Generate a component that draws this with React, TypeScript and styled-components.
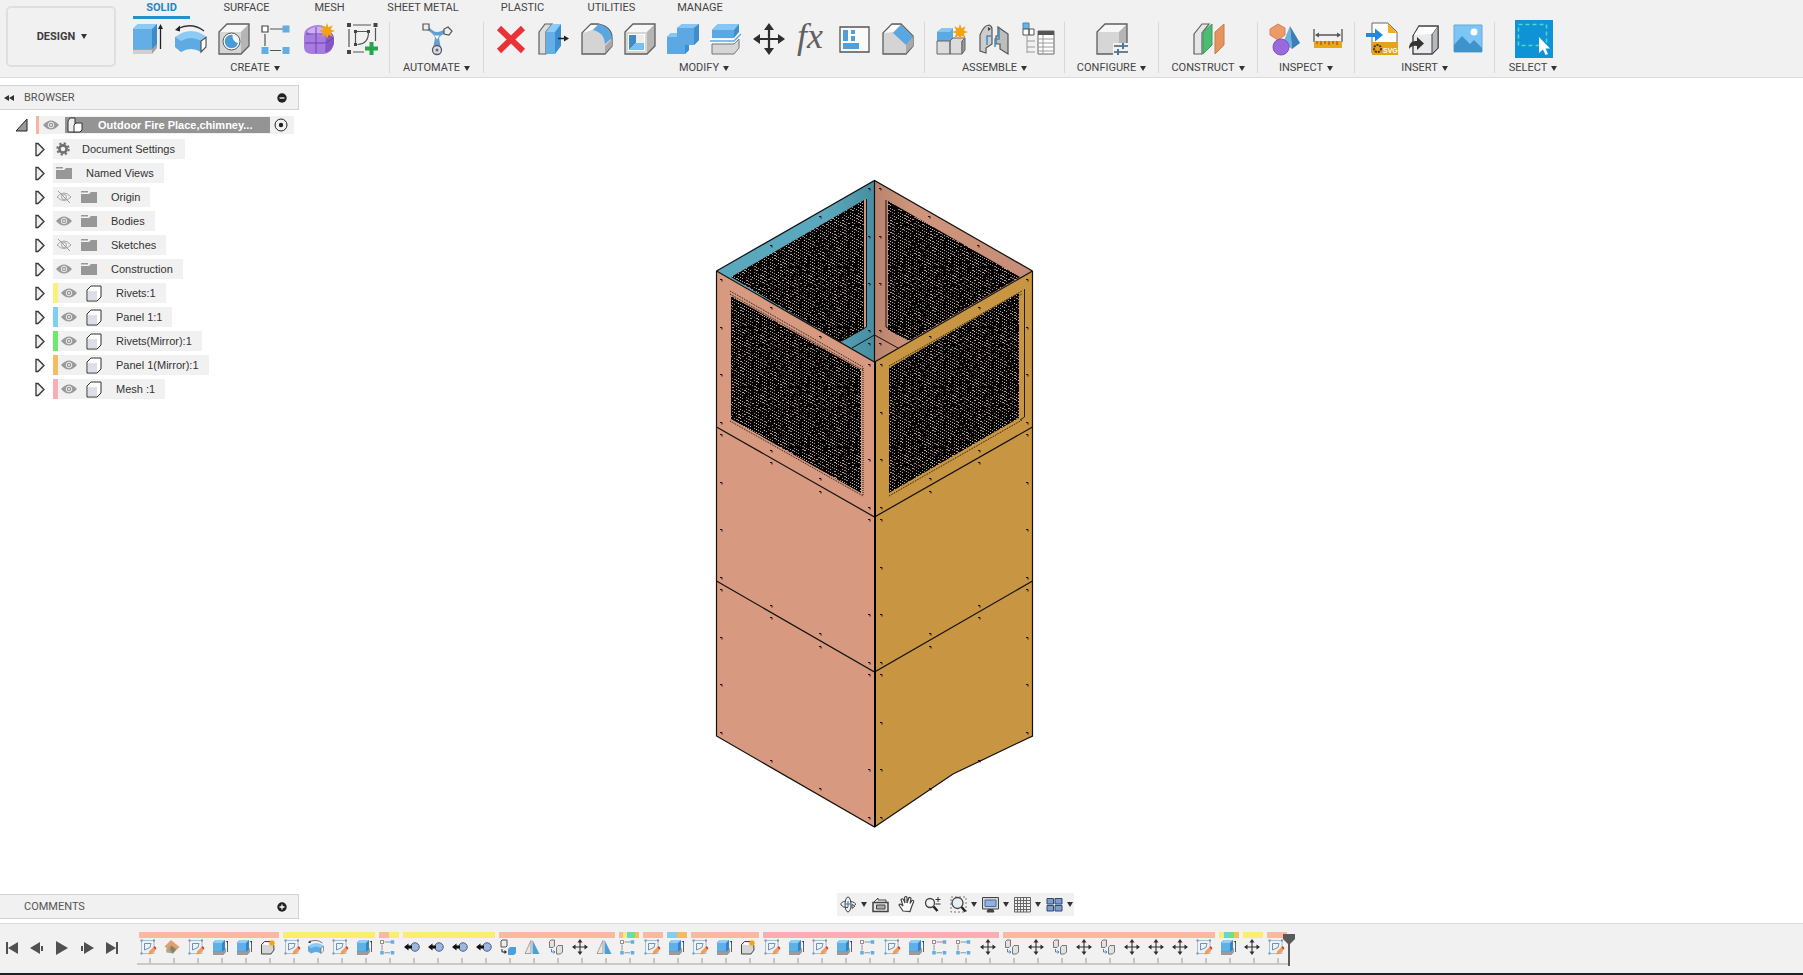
import React from "react";
import styled, { createGlobalStyle } from "styled-components";

const Global = createGlobalStyle`
  * { box-sizing: border-box; }
  body { margin: 0; background: #fff; color: #3c3c3c; font-family: Roboto, Arial, sans-serif; font-size: 11px; }
  button { font: inherit; color: inherit; background: none; border: 0; padding: 0; margin: 0; display: inline-flex; align-items: center; justify-content: center; }
  svg { display: block; flex: none; }
  ul { list-style: none; margin: 0; padding: 0; }
`;

/* ---------- shell ---------- */
const Page = styled.div`min-height: 100vh; display: flex; flex-direction: column; background: #fff; overflow-x: hidden;`;
const Toolbar = styled.header`display: flex; background: #f1f1f1; border-bottom: 1px solid #dadada; height: 78px; flex: none;`;
const DesignButton = styled.button`
  width: 110px; margin: 6px 5px 10px 6px; border: 2px solid #dfdfdf; border-radius: 5px;
  font-weight: 700; gap: 6px; flex: none; padding-left: 2px;
`;
const Ribbon = styled.div`flex: 1; min-width: 0;`;
const Tabs = styled.nav`display: flex; gap: 20px; padding-left: 12px;`;
const Tab = styled.button<{ $width: number; $active?: boolean }>`
  width: ${p => p.$width}px; height: 19px; padding: 0 0 1px; line-height: 14px;
  border-bottom: 3px solid ${p => (p.$active ? "#2a8fc9" : "transparent")};
  color: ${p => (p.$active ? "#1f87c4" : "#444")};
  font-weight: ${p => (p.$active ? 700 : 400)}; white-space: nowrap;
`;
const Groups = styled.div`display: flex; margin-top: 3px;`;
const Group = styled.section<{ $width?: number }>`
  display: flex; flex-direction: column; align-items: center; height: 51px; padding-top: 1px; flex: none;
  width: ${p => (p.$width ? `${p.$width}px` : "auto")};
  border-right: 1px solid #d8d8d8;
  &:last-child { border-right: 0; }
`;
const Icons = styled.div`display: flex; gap: 11px; padding: 0 10px 0 11px; height: 32px; align-items: center;`;
const Menu = styled.button`line-height: 14px; margin-top: 6px; gap: 4px; white-space: nowrap; color: #444;`;
const Caret = styled.span`width: 0; height: 0; border: 3px solid transparent; border-top: 5px solid #333; border-bottom: 0;`;

/* ---------- icons ---------- */
type IcoProps = { size?: number; children: React.ReactNode };
const Ico = ({ size = 32, children }: IcoProps) => (
  <svg width={size} height={size} viewBox="0 0 32 32" fill="none" overflow="visible" aria-hidden="true">{children}</svg>
);
const K = "#5f5f5f";
const star = (x: number, y: number, r: number) => {
  const pts: string[] = [];
  for (let i = 0; i < 16; i++) {
    const a = (Math.PI * i) / 8, q = i % 2 ? r * 0.5 : r;
    pts.push(`${(x + q * Math.sin(a)).toFixed(1)},${(y - q * Math.cos(a)).toFixed(1)}`);
  }
  return <polygon points={pts.join(" ")} fill="#f2a30f" />;
};
const arrows = (
  <>
    <path d="M16 4V28M4 16H28" stroke="#2e2e2e" strokeWidth="2.2" />
    <path d="M16 0l5 7H11zM16 32l5-7H11zM0 16l7-5v10zM32 16l-7-5v10z" fill="#2e2e2e" />
  </>
);
const cubeGrey = (
  <>
    <path d="M1 9L9 1H31V23L23 31H1Z" fill="#d6d6d6" />
    <path d="M1 9L9 1H31L23 9Z" fill="#f7f7f7" />
    <path d="M31 1V23L23 31V9Z" fill="#b5b5b5" />
    <path d="M1 9L9 1H31V23L23 31H1Z" stroke={K} strokeWidth="1.3" />
  </>
);
const art: Record<string, React.ReactNode> = {
  extrude: <>
    <path d="M1 26l5-5h19v4l-5 6H1z" fill="#a4a4a4" /><path d="M1 27h19v4H1z" fill="#cfcfcf" />
    <path d="M1 6l5-5h19v20l-5 5H1z" fill="#3c8ecb" /><path d="M1 6h19v20H1z" fill="#63aee4" /><path d="M1 6l5-5h19l-5 5z" fill="#8ccbf6" />
    <path d="M28.500 26V5" stroke="#222" strokeWidth="1.300" /><path d="M28.500 1l2.500 5h-5z" fill="#222" />
  </>,
  revolve: <>
    <path d="M0 14Q16 2 32 14L26 19Q16 12 6 19L6 29L0 24Z" fill="#8ccbf6" /><path d="M0 14L6 18Q16 12 26 18V29Q16 23 6 29L0 24Z" fill="#5eaae2" />
    <path d="M26 18L31 14.500V24L26 29Z" fill="#fff" stroke="#555" strokeWidth="1.200" />
    <path d="M3 5.500Q17-1 29 8" stroke="#333" strokeWidth="1.300" /><path d="M0 7l5-4.500v6z" fill="#222" />
  </>,
  hole: <>{cubeGrey}<circle cx="13.500" cy="18.500" r="8.500" fill="#fff" stroke="#555" /><circle cx="13.500" cy="18.500" r="6.800" fill="#4a9bd7" /><path d="M14.500 11.700a6.800 6.800 0 0 1 5.600 8.500q-6-2-5.600-8.500z" fill="#fff" /></>,
  pattern: <>
    <path d="M9 6H22M4 11v12M9 27.500H20" stroke="#555" strokeWidth="1.200" />
    <path d="M1 3h6v6H1z" fill="#fff" stroke="#444" strokeWidth="1.200" /><path d="M21.500 2.500h7v7h-7zM.5 24h7v7h-7zM21.500 24h7v7h-7z" fill="#62aee4" />
  </>,
  form: <>
    <path d="M0 14Q0 6 6 4Q14 0 22 4Q27 8 29 12V22Q28 30 20 31H8Q0 31 0 24Z" fill="#a77be0" /><path d="M3 8Q14-1 24 8Q19 13 12 12Q6 12 3 8Z" fill="#cdaef3" /><path d="M22 11Q29 8 30 15V21Q28 28 21 30Z" fill="#8458c4" />
    <path d="M12 4V30M1 20H22L29 15M2 11H22" stroke="#6f44ae" />{star(23, 8, 8)}
  </>,
  sketch: <>
    <path d="M6 2H24M2 6V24M28.500 5V18M6 29H17" stroke="#555" strokeWidth="1.200" />
    <path d="M0 0h4v4H0zM26.500 0h4v4h-4zM0 27h4v4H0zM7 7h3v3H7zM20 7h3v3h-3zM7 20h3v3H7z" fill="#444" />
    <path d="M8.500 10v10M10 8.500H20M21.500 9q0 12-11 12.500" stroke="#555" strokeWidth="1.200" />
    <path d="M22.500 19h4v4.500H31v4h-4.500V32h-4v-4.500H18v-4h4.500z" fill="#27a34b" />
  </>,
  automate: <>
    <path d="M4 6Q13 10 14 15L12 26H20L18 15Q21 10 29 9L26 5Q20 9 16 9Q12 9 7 3Z" fill="#5f9fd2" /><path d="M13.500 12.500h5l-2.500 4z" fill="#fff" />
    <path d="M2 1h6v6H2z" fill="#eee" stroke="#555" strokeWidth="1.200" /><path d="M27 4l4 4-3 4-5-1v-5z" fill="#eee" stroke="#555" strokeWidth="1.200" />
    <circle cx="16" cy="27" r="4.500" fill="#ddd" stroke="#557" strokeWidth="1.300" /><circle cx="16" cy="27" r="1.500" fill="#667" />
  </>,
  remove: <path d="M4 5L28 28M28 5L4 28" stroke="#ea3338" strokeWidth="6" />,
  press: <>
    <path d="M1 9L7 1H14L8 9V31H1Z" fill="#ddd" stroke={K} strokeWidth="1.200" /><path d="M8 9L14 1H23V23L17 31H8Z" fill="#3e8fcd" /><path d="M8 9H17V31H8Z" fill="#64afe5" /><path d="M8 9L14 1H23L17 9Z" fill="#8ccbf6" />
    <path d="M20 15.500h7" stroke="#222" strokeWidth="1.500" /><path d="M31 15.500l-5-3v6z" fill="#222" />
  </>,
  fillet: <>
    <path d="M1 10L10 1H17Q31 4 31 15V23L24 31H1Z" fill="#d4d4d4" stroke={K} strokeWidth="1.300" /><path d="M2 10L10 2H16L11 7Z" fill="#fff" />
    <path d="M24 23L31 16V23L24 30Z" fill="#a9a9a9" /><path d="M12 7L18 1Q30 4 31 15L24 21Q23 9 12 7Z" fill="#58a7e1" />
  </>,
  shell: <>{cubeGrey}<path d="M4 11H21V28H4Z" fill="#fff" /><path d="M5 12H12V20L5 27Z" fill="#3c8cca" /><path d="M5 27L12 20H20V27Z" fill="#79c0f0" /><path d="M12 12H20V20H12Z" fill="#ececec" /></>,
  combine: <>
    <path d="M10 5L15 1H32V17L27 22H22V27L18 31H0V14L4 10H10Z" fill="#5ba8e2" /><path d="M10 5L15 1H32L27 5ZM0 14L4 10H10V14Z" fill="#86c6f3" /><path d="M32 1V17L27 22V5ZM22 22V27L18 31V22Z" fill="#3d8ecb" />
  </>,
  split: <>
    <path d="M2 7L8 1H29V9L24 15H2Z" fill="#3d8ecb" /><path d="M2 7H24V15H2Z" fill="#5ba8e2" /><path d="M2 7L8 1H29L24 7Z" fill="#86c6f3" />
    <path d="M2 21H24L29 16V25L24 31H2Z" fill="#d6d6d6" stroke="#777" /><path d="M0 18H24L31 11" stroke="#fff" strokeWidth="3.500" /><path d="M0 18H24L31 11" stroke="#5ba8e2" strokeWidth="1.500" />
  </>,
  move: arrows,
  fx: <text x="1" y="25" fontFamily="Liberation Serif, serif" fontStyle="italic" fontSize="36" fill="#606060">fx</text>,
  params: <>
    <path d="M1 4H30V29H1Z" fill="#fafafa" stroke="#555" strokeWidth="1.300" /><path d="M4 7h5v11H4zM12 7h4v4h-4zM12 13h4v5h-4zM4 20h16v6H4z" fill="#4f9fdb" />
  </>,
  chamfer: <>
    <path d="M1 10L10 1H19L31 13V23L24 31H1Z" fill="#d4d4d4" stroke={K} strokeWidth="1.300" /><path d="M2 10L10 2H18L11 9Z" fill="#fff" />
    <path d="M24 22L31 14V23L24 30Z" fill="#a9a9a9" /><path d="M11 10L19 2L31 14L24 22Z" fill="#58a7e1" />
  </>,
  component: <>
    <path d="M1 9L6 5H17V18H1Z" fill="#5ba8e2" /><path d="M1 9L6 5H17L14 9Z" fill="#86c6f3" /><path d="M1 18H14V31H1ZM14 18L17 15H29L26 18V31H14Z" fill="#dcdcdc" stroke="#666" /><path d="M26 18L29 15V27L26 31Z" fill="#999" stroke="#666" />{star(24, 9, 8)}
  </>,
  joint: <>
    <path d="M1 12Q5 2 10 2Q13 3 13 6V21L7 25V30L1 28Z" fill="#cdcdcd" stroke="#555" strokeWidth="1.200" /><path d="M19 4L29 11V31L21 26V21H17V13H19Z" fill="#bdbdbd" stroke="#555" strokeWidth="1.200" /><path d="M12 13H8V22M20 6V16H16V24" stroke="#3f8dc0" strokeWidth="1.500" /><path d="M9 4l3 2-3 2z" fill="#444" />
  </>,
  bom: <>
    <path d="M1 0h6v6H1z" fill="#6cb2e6" stroke="#3f86bb" /><path d="M1 6h6v6H1zM7 6h5v6H7z" fill="#fff" stroke="#555" /><path d="M5 13V30M5 18h8M5 24h8M5 29h8" stroke="#999" />
    <path d="M16 8h16v23H16z" fill="#fff" stroke="#666" /><path d="M16 8h16v4H16z" fill="#555" /><path d="M16 16h16M16 20h16M16 24h16M16 28h16M21 12v19" stroke="#999" />
  </>,
  configure: <>{cubeGrey}<path d="M17 20H33V33H17Z" fill="#f1f1f1" /><path d="M18 23H32M18 29H32" stroke="#555" strokeWidth="1.500" /><path d="M27 20v6M22 26v6" stroke="#2f7fb5" strokeWidth="2" /></>,
  plane: <>
    <path d="M1 11L9 1H16L9 10V31H1Z" fill="#e6e6e6" stroke={K} strokeWidth="1.200" /><path d="M10 9L19 1V22L10 31Z" fill="#4bbd73" stroke="#3a9a5d" /><path d="M22 9L31 1V22L22 31Z" fill="#e5945f" stroke="#c97a48" />
  </>,
  inspect: <>
    <path d="M9 1L16 5V12L9 17L1 12V6Z" fill="#eb9a6a" stroke="#d58354" /><path d="M21 3L14 20L23 26Z" fill="#6cb1e4" /><path d="M21 3L31 20L23 26Z" fill="#3c7fb8" /><circle cx="12" cy="24" r="8" fill="#9a69dc" stroke="#8052c0" />
  </>,
  measure: <>
    <path d="M2 6V19M30 6V19M4 12H28" stroke="#555" strokeWidth="1.300" /><path d="M3 12l4-2.500v5zM29 12l-4-2.500v5z" fill="#555" /><path d="M2 18H30V25H2Z" fill="#eda31b" /><path d="M5 18v3M9 18v4M13 18v3M17 18v4M21 18v3M25 18v4" stroke="#7b530c" />
  </>,
  svg: <>
    <path d="M6 0H22L31 9V30H6Z" fill="#fff" stroke="#666" /><path d="M22 0L31 10H22Z" fill="#f4ad20" /><path d="M6 19H32V32H6Z" fill="#e9a01a" /><circle cx="11.500" cy="25.500" r="3.500" stroke="#4b3306" strokeWidth="2" strokeDasharray="2 1" />
    <text x="17" y="30" fontFamily="Liberation Sans, sans-serif" fontWeight="700" fontSize="7" fill="#fff">SVG</text><path d="M0 10H9V5.500L17 12L9 18.500V14H0Z" fill="#2188de" />
  </>,
  derive: <>
    <path d="M4 13L10 3H29V25L23 31H4Z" fill="#e8eaee" stroke="#444" strokeWidth="1.400" /><path d="M23 11L29 3V25L23 31Z" fill="#b9b9bd" stroke="#444" /><path d="M5 12L10 4H28L23 11Z" fill="#fff" /><path d="M0 26Q0 17 8 18V14L15 20.500L8 27V23Q3 22 0 26Z" fill="#333" />
  </>,
  image: <>
    <path d="M2 2H30V29H2Z" fill="#7cc5f4" stroke="#69a8d0" /><circle cx="22" cy="9" r="3.500" fill="#fff" /><path d="M2 22L10 13L18 21L22 17L30 25V29H2Z" fill="#3f93cd" />
  </>,
  newcomp: <><path d="M3 11L9 5H24Q29 12 28 22L22 30H3Z" fill="#d5d5d5" stroke="#444" strokeWidth="2" /><path d="M5 11L10 7H20L17 12Z" fill="#fff" />{star(24, 8, 8)}</>,
  tsketch: <>
    <path d="M3 3H28V29H3Z" stroke="#8fb0c8" strokeWidth="1.500" /><path d="M1 1h4v4H1zM26 1h4v4h-4zM1 27h4v4H1z" fill="#6f93b0" /><path d="M9 9V22M9 9H22M22 9L20 17L9 22" stroke="#4f86b3" strokeWidth="1.700" />
    <path d="M17 31l1-6 9-9 5 5-9 9z" fill="#f0a04c" /><path d="M27 17l2-3 4 4-2 3z" fill="#d23b2f" />
  </>,
  textrude: <>
    <path d="M2 23H22L28 18V26L23 32H2Z" fill="#9b9b9b" /><path d="M2 7L8 2H26V20L22 25H2Z" fill="#3585c4" /><path d="M2 8H20V25H2Z" fill="#5fb0ea" /><path d="M2 8L8 2H26L20 8Z" fill="#92cff7" /><path d="M31 5V26" stroke="#333" strokeWidth="1.500" /><path d="M27 4h5V8z" fill="#333" />
  </>,
  tplane: <><path d="M1 15L14 2L31 16L18 29Z" fill="#dda06f" /><path d="M4 21L14 13L24 20L18 29L5 27Z" fill="#a9a884" /><path d="M14 13L24 20L18 29L12 21Z" fill="#8c7d64" /></>,
  snap: <><circle cx="22" cy="16" r="8.500" fill="#9fb6e0" stroke="#52607c" strokeWidth="2" /><path d="M0 16L9 9V13H16V19H9V23Z" fill="#111" /></>,
  mirror: <><path d="M14 3V29H2Z" fill="#e6e6e6" stroke="#888" strokeWidth="1.500" /><path d="M17 2V30H31Z" fill="#4e9fd6" /></>,
  copy: <>
    <path d="M3 5L6 2H13V14L10 17H3Z" fill="#e2e2e2" stroke="#777" strokeWidth="2" /><path d="M17 17L20 13H29V26L25 30H17Z" fill="#e2e2e2" stroke="#777" strokeWidth="2" /><path d="M7 20V26H14M14 26l-3-3M14 26l-3 3" stroke="#4d86bd" strokeWidth="2" />
  </>,
  tcopy: <>
    <path d="M2 4L4 2H14V14L12 16H2Z" fill="#ececec" stroke="#555" strokeWidth="2" /><path d="M16 20L20 16H32V28L28 32H16Z" fill="#4e9fd9" /><path d="M4 20V26H10" stroke="#222" strokeWidth="2" /><path d="M14 26l-5-4v8z" fill="#222" />
  </>,
};
const SelectBadge = styled.span`width: 38px; height: 38px; margin: -3px 0; background: #0e93d6; display: block;`;

const tabs: [string, number][] = [
  ["SOLID", 57], ["SURFACE", 73], ["MESH", 53], ["SHEET METAL", 94], ["PLASTIC", 65], ["UTILITIES", 73], ["MANAGE", 64],
];
const groups: { name: string; width?: number; icons: string[] }[] = [
  { name: "CREATE", icons: ["extrude", "revolve", "hole", "pattern", "form", "sketch"] },
  { name: "AUTOMATE", width: 94, icons: ["automate"] },
  { name: "MODIFY", icons: ["remove", "press", "fillet", "shell", "combine", "split", "move", "fx", "params", "chamfer"] },
  { name: "ASSEMBLE", icons: ["component", "joint", "bom"] },
  { name: "CONFIGURE", width: 94, icons: ["configure"] },
  { name: "CONSTRUCT", width: 99, icons: ["plane"] },
  { name: "INSPECT", icons: ["inspect", "measure"] },
  { name: "INSERT", icons: ["svg", "derive", "image"] },
];

/* ---------- browser panel ---------- */
const Workspace = styled.main`flex: 1; position: relative; display: flex; flex-direction: column;`;
const SidePanel = styled.aside`width: 299px; flex: 1; display: flex; flex-direction: column; padding: 7px 0 4px; position: relative; z-index: 1;`;
const PanelHeader = styled.div`
  display: flex; align-items: center; height: 25px; padding-right: 11px; background: #f1f1f1; flex: none;
  border: 1px solid #d2d2d2; border-left: 0; color: #555;
`;
const Collapse = styled.button`width: 24px; padding-right: 6px;`;
const PanelTitle = styled.span`flex: 1;`;
const Tree = styled.ul`padding-top: 3px; flex: 1; font-family: "Liberation Sans", Arial, sans-serif;`;
const Row = styled.li<{ $root?: boolean }>`display: flex; align-items: center; height: 24px; padding-left: ${p => (p.$root ? 14 : 35)}px;`;
const Twisty = styled.button<{ $root?: boolean }>`width: ${p => (p.$root ? 22 : 18)}px; height: 16px; justify-content: flex-start;`;
const Chip = styled.div<{ $bar?: string }>`
  display: flex; align-items: center; height: 20px; background: #f1f1f1; padding: 0 10px 0 3px;
  border-left: ${p => (p.$bar ? `5px solid ${p.$bar}` : "0")};
`;
const Name = styled.span<{ $gap: number }>`margin-left: ${p => p.$gap}px; line-height: 14px; color: #333; white-space: nowrap;`;
const Slot = styled.span`width: 25px; display: flex;`;
const RootChip = styled.div`display: flex; align-items: center; height: 18px; width: 258px; background: #f1f1f1; border-left: 3px solid #f5b5a0; padding-left: 4px;`;
const RootName = styled.div`display: flex; align-items: center; width: 205px; height: 16px; margin: 0 4px 0 6px; padding-left: 2px; gap: 15px; background: #949494; color: #fff; font-weight: 700; white-space: nowrap;`;

const Eye = ({ off }: { off?: boolean }) => (
  <svg width="16" height="16" viewBox="0 0 16 16" fill="none" aria-hidden="true">
    {off ? (
      <><path d="M1 8Q8 0 15 8Q8 15 1 8Z" stroke="#a5a5a5" /><circle cx="8" cy="8" r="2.500" stroke="#a5a5a5" /><path d="M2 2L14 14" stroke="#999" /></>
    ) : (
      <><path d="M0 8Q8-1 16 8Q8 17 0 8Z" fill="#9a9a9a" /><circle cx="8" cy="8" r="2.800" stroke="#eee" /><circle cx="8" cy="8" r="1" fill="#eee" /></>
    )}
  </svg>
);
const Folder = () => (
  <svg width="16" height="14" viewBox="0 0 16 14" aria-hidden="true"><path d="M0 1H7V2.500H0ZM0 4H8L10 2H16V13H0Z" fill="#979797" /></svg>
);
const Gear = () => (
  <svg width="16" height="16" viewBox="0 0 16 16" fill="none" aria-hidden="true">
    <circle cx="7" cy="8" r="3.600" stroke="#6f6f6f" strokeWidth="2.600" /><circle cx="7" cy="8" r="5.700" stroke="#6f6f6f" strokeWidth="2" strokeDasharray="2.200 2.280" />
  </svg>
);
const Body = () => (
  <svg width="16" height="17" viewBox="0 0 16 17" fill="none" aria-hidden="true">
    <path d="M1 5L5 1H15V12L11 16H1Z" fill="#fff" stroke="#333" strokeLinejoin="round" /><path d="M2 6H11V15H2Z" fill="#dcdfe6" />
  </svg>
);
const RootBody = () => (
  <svg width="16" height="16" viewBox="0 0 16 16" fill="none" aria-hidden="true">
    <path d="M1 4L3 1H8V15H1Z" fill="#eee" stroke="#333" /><path d="M7 8L9 6H15V13L13 15H7Z" fill="#fff" stroke="#333" />
  </svg>
);
const Tri = () => (
  <svg width="10" height="15" viewBox="0 0 10 15" fill="none" aria-hidden="true"><path d="M1 1.500H3L9 7.500L3 13.500H1Z" fill="#f0f0f0" stroke="#333" strokeWidth="1.300" /></svg>
);
type Node = { name: string; kind: "gear" | "views" | "folder" | "body"; off?: boolean; bar?: string };
const nodes: Node[] = [
  { name: "Document Settings", kind: "gear" },
  { name: "Named Views", kind: "views" },
  { name: "Origin", kind: "folder", off: true },
  { name: "Bodies", kind: "folder" },
  { name: "Sketches", kind: "folder", off: true },
  { name: "Construction", kind: "folder" },
  { name: "Rivets:1", kind: "body", bar: "#fbf07a" },
  { name: "Panel 1:1", kind: "body", bar: "#7fd0ee" },
  { name: "Rivets(Mirror):1", kind: "body", bar: "#6bea6d" },
  { name: "Panel 1(Mirror):1", kind: "body", bar: "#f3bd63" },
  { name: "Mesh :1", kind: "body", bar: "#f8aeb2" },
];
const RoundMark = ({ plus }: { plus?: boolean }) => (
  <svg width="10" height="10" viewBox="0 0 10 10" aria-hidden="true"><circle cx="5" cy="5" r="4.700" fill="#222" /><path d={plus ? "M2.500 5H7.500M5 2.500V7.500" : "M2.500 5H7.500"} stroke="#fff" strokeWidth="1.300" /></svg>
);

/* ---------- model ---------- */
const Stage = styled.div`position: absolute; inset: 0; display: flex; justify-content: center; padding: 101px 53px 0 0; overflow: hidden;`;

/* Perforated sheet: light specks on a two-pixel lattice, alternate columns staggered. */
const flecks: { x: number; y: number; w: number; c: string }[] = [];
{
  let s = 41;
  const tones = ["#b39a90", "#cfc2bb", "#8d7a72", "#aaa39f"];
  for (let x = 0; x < 48; x += 2)
    for (let y = 0; y < 60; y += 3) {
      s = (s * 1103515245 + 12345) % 2147483648;
      const r = (s >> 8) % 100;
      if (r < (x % 8 === 0 ? 60 : 88)) flecks.push({ x, y: y + ((x / 2) % 3), w: r % 6 === 0 ? 2 : 1, c: tones[r % 4] });
    }
}
const rivets: [number, number][] = [];
[271, 426, 581].forEach(b => {
  [9, 57, 104, 152].forEach((d, i) => {
    rivets.push([721, b + d], [1027, b + d], [881, b + d + 85]);
    if (i !== 1) rivets.push([869, b + d + 85]);
  });
  [[37, 66], [180, 208]].forEach(([near, far]) =>
    rivets.push([771, b + near], [979, b + near], [820, b + far], [930, b + far]));
});
[189, 237, 284, 331, 344].forEach(y => rivets.push([869, y], [880, y]));
rivets.push([820, 217], [771, 246], [929, 217], [978, 246]);

const Model = () => (
  <svg width="320" height="652" viewBox="715 179 320 652" fill="none" role="img" aria-label="Fire place chimney model">
    <defs>
      <pattern id="mesh" width="48" height="60" patternUnits="userSpaceOnUse">
        <rect width="48" height="60" fill="#060404" />
        {flecks.map((f, i) => <rect key={i} x={f.x} y={f.y} width={f.w} height="1" fill={f.c} />)}
      </pattern>
      <linearGradient id="blue" x1="0" x2="1" y1="0" y2="0"><stop offset="0.700" stopColor="#5aa8bd" /><stop offset="1" stopColor="#468da0" /></linearGradient>
      <linearGradient id="rose" x1="0" x2="1" y1="0" y2="0"><stop offset="0" stopColor="#b9836e" /><stop offset="0.250" stopColor="#d0967d" /><stop offset="1" stopColor="#c58d76" /></linearGradient>
    </defs>
    <path d="M716.500 271L874.500 180.500V362Z" fill="url(#blue)" />
    <path d="M874.500 180.500L1032.500 271L874.500 362Z" fill="url(#rose)" />
    <path d="M731 277L866 199V327L841 341.500Z" fill="#cf957c" />
    <path d="M731 277L864 200V329L840 342Z" fill="url(#mesh)" />
    <path d="M888 201L1020 277L909 341L888 330Z" fill="url(#mesh)" />
    <g stroke="#111" strokeWidth="1">
      <path d="M866.500 199V327L842 341M886 200V327L907 339M874.500 335L852 348M874.500 335L898 348" />
      <path d="M716.500 271L874.500 180.500L1032.500 271M874.500 180.500V362" strokeWidth="1.200" />
    </g>
    <path d="M716.500 271L874.500 362V827L716.500 736Z" fill="#d7997f" />
    <path d="M1032.500 271L874.500 362V827L953 774L1032.500 736Z" fill="#c89642" />
    <path d="M731 296L861 370V493L731 419Z" fill="url(#mesh)" />
    <path d="M889 368L1019 293V418L889 493Z" fill="url(#mesh)" />
    <g stroke="#111" strokeDasharray="1 1">
      <path d="M730 291L863 367M730 294L863 370M863 368V495M730 421L863 496M889 366L1022 291M889 369L1022 294M889 496L1022 420" />
    </g>
    <path d="M1024.500 289V417L1020 420" stroke="#222" />
    <g stroke="#111" strokeWidth="1.200">
      <path d="M716.500 271L874.500 362L1032.500 271M716.500 427L874.500 517L1032.500 427M716.500 581L874.500 672L1032.500 581" />
      <path d="M716.500 271V736L874.500 827L953 774L1032.500 736V271" />
    </g>
    <path d="M875 362V827" stroke="#000" strokeWidth="2" />
    {rivets.map(([x, y], i) => <path key={i} d={`M${x - 1} ${y - 0.5}h2v2`} stroke="#1c0f0a" />)}
  </svg>
);

/* ---------- navigation bar ---------- */
const NavRow = styled.div`position: absolute; left: 0; right: 0; bottom: 7px; display: flex; justify-content: center; padding-left: 108px; z-index: 1;`;
const NavBar = styled.div`display: flex; align-items: center; width: 237px; height: 23px; background: #f1f1f1; padding-left: 3px;`;
const NavItem = styled.button<{ $menu?: boolean }>`gap: 4px; height: 22px; margin-right: ${p => (p.$menu ? 5 : 9)}px;`;
const N = ({ children }: { children: React.ReactNode }) => <svg width="17" height="17" viewBox="0 0 17 17" fill="none" stroke="#444" aria-hidden="true">{children}</svg>;
const navs: { label: string; menu?: boolean; art: React.ReactNode }[] = [
  { label: "Orbit", menu: true, art: <><ellipse cx="8" cy="8.500" rx="3" ry="7.500" /><path d="M6 5Q0 6 1 9Q3 12 8 11.500M10 5.500Q16 6 15.500 9M15 10l-3 2.500v-4z" /><path d="M8 5v6M5 8h6" stroke="#2d77b5" /></> },
  { label: "Look at", art: <><path d="M2 6L6 2V4H14V6" /><path d="M1 6.500H16V15.500H1Z" fill="#e4e4e4" strokeWidth="1.500" /><path d="M4.500 9H13V13H4.500Z" fill="#aaa" /></> },
  { label: "Pan", art: <path d="M5 15L1 9Q2 7 5 10L3 3.500Q4 2 5.500 3.500L7 7L6.500 1.500Q8-.5 9 1.500V7L11 1.500Q12.500 1 13 2.500L12 7.500L14 4.500Q16 4 15.500 6L13.500 11L12 15.500Z" fill="#fff" strokeWidth="1.200" /> },
  { label: "Zoom", art: <><circle cx="6" cy="7" r="4.500" fill="#eef4f6" strokeWidth="1.300" /><path d="M9.500 10.500L13.500 15" stroke="#222" strokeWidth="2.500" /><path d="M14 1v5M11.500 3.500h5M11.500 8h5" stroke="#333" /></> },
  { label: "Fit", menu: true, art: <><path d="M1 1H16V16H1Z" strokeDasharray="2 2" stroke="#777" /><circle cx="7.500" cy="7" r="5.500" fill="#e6f0f2" strokeWidth="1.300" /><path d="M11.500 11L15.500 15.500" stroke="#222" strokeWidth="2.500" /></> },
  { label: "Display settings", menu: true, art: <><path d="M.5 1.500H16.500V13H.5Z" fill="#d5d5d5" /><path d="M3 4H14V10.500H3Z" fill="#8fb2e0" stroke="#4a6d9c" /><path d="M6 13.500H11L12 16H5Z" fill="#444" /></> },
  { label: "Grid and snaps", menu: true, art: <path d="M.5 1.500H16.500V16H.5ZM3.500 1.500V16M6.500 1.500V16M9.500 1.500V16M12.500 1.500V16M.5 4.500H16.500M.5 7.500H16.500M.5 10.500H16.500M.5 13.500H16.500" stroke="#666" /> },
  { label: "Viewports", menu: true, art: <path d="M1 2.500H7.500V8H1ZM9 2.500H16V8H9ZM1 9.500H7.500V15H1ZM9 9.500H16V15H9Z" fill="#7e9dcc" stroke="#33486b" /> },
];

/* ---------- timeline ---------- */
const Timeline = styled.footer`height: 52px; flex: none; display: flex; background: #f1f1f1; border-top: 1px solid #dcdcdc; border-bottom: 2px solid #1f2226;`;
const Playback = styled.div`display: flex; align-items: flex-start; width: 137px; padding: 16px 0 0 4px; gap: 9px; flex: none;`;
const Track = styled.div`display: flex; position: relative; padding-top: 8px;`;
const Feature = styled.div`display: flex; flex-direction: column;`;
const Band = styled.div<{ $fill: string }>`height: 6px; margin: 0 2px; background: ${p => p.$fill};`;
const Steps = styled.div`display: flex;`;
const Step = styled.button`
  width: 24px; height: 27px; padding: 1px 2px 8px 0; flex: none; position: relative;
  border-bottom: 2px solid #c9c9c9;
  &::after { content: ""; position: absolute; left: 12px; bottom: 0; width: 2px; height: 5px; background: #c4c4c4; }
`;
const Playhead = styled.div`position: absolute; right: -6px; top: 10px;`;

const salmon = "#f9b8a2", yellow = "#faee70", pink = "#f9aeb3";
const S = "tsketch", E = "textrude", M = "move", P = "pattern", C = "copy";
const features: { fill: string; steps: string[] }[] = [
  { fill: salmon, steps: [S, "tplane", S, E, E, "newcomp"] },
  { fill: yellow, steps: [S, "revolve", S, E] },
  { fill: `linear-gradient(90deg, ${salmon} 50%, ${yellow} 50%)`, steps: [P] },
  { fill: yellow, steps: ["snap", "snap", "snap", "snap"] },
  { fill: salmon, steps: ["tcopy", "mirror", C, M, "mirror"] },
  { fill: `linear-gradient(90deg, ${salmon} 20%, ${yellow} 20% 40%, #62d6e0 40% 60%, #6be57a 60% 80%, #f3bd63 80%)`, steps: [P] },
  { fill: salmon, steps: [S] },
  { fill: "linear-gradient(90deg, #7fd0ee 50%, #f8b960 50%)", steps: [E] },
  { fill: salmon, steps: [S, E, "newcomp"] },
  { fill: pink, steps: [S, E, S, E, P, S, E, P, P, M] },
  { fill: salmon, steps: [C, M, C, M, C, M, M, M, S] },
  { fill: `linear-gradient(90deg, ${yellow} 25%, #62d6e0 25% 50%, #6be57a 50% 75%, #f3bd63 75%)`, steps: [E] },
  { fill: yellow, steps: [M] },
  { fill: salmon, steps: [S] },
];
const playback = [
  { label: "Go to start", d: "M2 2H4V14H2ZM14 2V14L4 8Z" },
  { label: "Step back", d: "M11 2V14L1 8ZM12 6H14V11H12Z" },
  { label: "Play", d: "M2 1L14 8L2 15Z" },
  { label: "Step forward", d: "M5 2V14L15 8ZM2 6H4V11H2Z" },
  { label: "Go to end", d: "M12 2H14V14H12ZM2 2V14L12 8Z" },
];

export default function App() {
  return (
    <Page>
      <Global />
      <Toolbar>
        <DesignButton>DESIGN <Caret /></DesignButton>
        <Ribbon>
          <Tabs>
            {tabs.map(([name, width], i) => <Tab key={name} $width={width} $active={i === 0}>{name}</Tab>)}
          </Tabs>
          <Groups>
            {groups.map(g => (
              <Group key={g.name} $width={g.width}>
                <Icons>{g.icons.map(n => <button key={n} aria-label={n}><Ico>{art[n]}</Ico></button>)}</Icons>
                <Menu>{g.name}<Caret /></Menu>
              </Group>
            ))}
            <Group $width={76}>
              <Icons>
                <button aria-label="select">
                  <SelectBadge>
                    <svg width="38" height="38" viewBox="0 0 38 38" fill="none" aria-hidden="true">
                      <path d="M3.500 4.500H31.500V25.500H3.500Z" stroke="#52d8c4" strokeWidth="1.500" strokeDasharray="4 3" />
                      <path d="M24 17V33L28 29.500L30.500 35L33 34L30.500 28.500H35Z" fill="#fff" />
                    </svg>
                  </SelectBadge>
                </button>
              </Icons>
              <Menu>SELECT<Caret /></Menu>
            </Group>
          </Groups>
        </Ribbon>
      </Toolbar>

      <Workspace>
        <Stage><Model /></Stage>
        <SidePanel>
          <PanelHeader>
            <Collapse aria-label="Collapse">
              <svg width="10" height="6" viewBox="0 0 10 6" aria-hidden="true"><path d="M5 0V6L0 3ZM10 0V6L5 3Z" fill="#333" /></svg>
            </Collapse>
            <PanelTitle>BROWSER</PanelTitle>
            <button aria-label="Minimize"><RoundMark /></button>
          </PanelHeader>
          <Tree>
            <Row $root>
              <Twisty $root aria-label="Collapse document">
                <svg width="14" height="14" viewBox="0 0 14 14" aria-hidden="true"><path d="M13 1V13H2Z" fill="#999" stroke="#222" /></svg>
              </Twisty>
              <RootChip>
                <Eye />
                <RootName><RootBody />Outdoor Fire Place,chimney...</RootName>
                <svg width="14" height="14" viewBox="0 0 14 14" fill="none" aria-hidden="true"><circle cx="7" cy="7" r="6" stroke="#222" /><circle cx="7" cy="7" r="2.200" fill="#222" /></svg>
              </RootChip>
            </Row>
            {nodes.map(n => (
              <Row key={n.name}>
                <Twisty aria-label={`Expand ${n.name}`}><Tri /></Twisty>
                <Chip $bar={n.bar}>
                  {n.kind === "gear" && <Gear />}
                  {n.kind === "views" && <Folder />}
                  {n.kind === "folder" && <><Slot><Eye off={n.off} /></Slot><Folder /></>}
                  {n.kind === "body" && <><Slot><Eye /></Slot><Body /></>}
                  <Name $gap={n.kind === "gear" ? 10 : 14}>{n.name}</Name>
                </Chip>
              </Row>
            ))}
          </Tree>
          <PanelHeader>
            <Collapse as="span" />
            <PanelTitle>COMMENTS</PanelTitle>
            <button aria-label="Add comment"><RoundMark plus /></button>
          </PanelHeader>
        </SidePanel>
        <NavRow>
          <NavBar>
            {navs.map(n => <NavItem key={n.label} $menu={n.menu} aria-label={n.label}><N>{n.art}</N>{n.menu && <Caret />}</NavItem>)}
          </NavBar>
        </NavRow>
      </Workspace>

      <Timeline>
        <Playback>
          {playback.map(p => (
            <button key={p.label} aria-label={p.label}><svg width="16" height="16" viewBox="0 0 16 16" aria-hidden="true"><path d={p.d} fill="#505050" /></svg></button>
          ))}
        </Playback>
        <Track>
          {features.map((f, i) => (
            <Feature key={i}>
              <Band $fill={f.fill} />
              <Steps>{f.steps.map((s, j) => <Step key={j} aria-label={s}><Ico size={16}>{art[s]}</Ico></Step>)}</Steps>
            </Feature>
          ))}
          <Playhead>
            <svg width="12" height="32" viewBox="0 0 12 32" aria-hidden="true"><path d="M0 0H12V5L7 10V32H5V10L0 5Z" fill="#5a5a5a" /></svg>
          </Playhead>
        </Track>
      </Timeline>
    </Page>
  );
}
